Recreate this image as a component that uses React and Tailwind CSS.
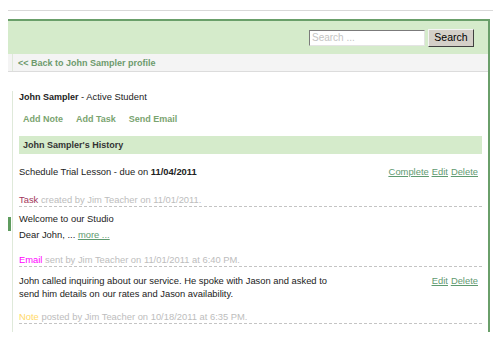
export default function App() {
  const font = { fontFamily: '"Liberation Sans", Arial, sans-serif' };
  return (
    <div className="w-[500px] h-[343px] bg-white text-[#222]" style={font}>
      <div className="h-[10px]" />
      <div className="ml-[8px] w-[485px] h-px bg-[#d9d9d9]" />
      <div className="relative ml-[8px] mt-[8px] w-[482px] border-t-2 border-r-2 border-[#6a9f6a]">
        <div className="h-[33px] bg-[#d5ebcb] flex items-center justify-end pr-[14px]">
          <input
            className="w-[116px] h-[16px] bg-white border border-t-[#7b7b7b] border-l-[#7b7b7b] border-b-[#e4e4e4] border-r-[#e4e4e4] text-[10px] px-[2px] outline-none placeholder:text-[#c4c4c4]"
            placeholder="Search ..."
            style={font}
          />
          <button
            className="ml-[3px] w-[46px] h-[18px] bg-[#d4d0c8] border border-t-[#f4f4f4] border-l-[#f4f4f4] border-b-[#404040] border-r-[#404040] text-[10.5px] text-black leading-none"
            style={font}
          >
            Search
          </button>
        </div>
        <div className="bg-[#f4f4f4] border-b border-[#dcdcdc]">
          <div className="ml-[4px] border-l border-[#dfe9da] h-[17px] pl-[5px] flex items-center">
            <a className="text-[9px] font-bold text-[#6d9a6d] leading-[12px]">&lt;&lt; Back to John Sampler profile</a>
          </div>
        </div>
        <div className="ml-[4px] border-l border-[#dfe9da] pl-[6px] pr-[6px] pb-[8px] text-[9.4px] leading-[12px]">
          <div className="mt-[19px]">
            <span className="font-bold text-[9px]">John Sampler</span> - Active Student
          </div>
          <div className="mt-[10px] flex gap-[13px] pl-[4px] font-bold text-[9px] text-[#7aa470]">
            <a>Add Note</a>
            <a>Add Task</a>
            <a>Send Email</a>
          </div>
          <div className="mt-[11px] h-[18px] bg-[#d5ebcb] px-[4px] flex items-center font-bold text-[9px] text-[#333]">
            John Sampler's History
          </div>
          <div className="mt-[12px] flex justify-between pr-[4px]">
            <div>
              Schedule Trial Lesson - due on <span className="font-bold">11/04/2011</span>
            </div>
            <div className="flex gap-[3px] text-[#5f9a70] underline">
              <a>Complete</a>
              <a>Edit</a>
              <a>Delete</a>
            </div>
          </div>
          <div className="mt-[16px] border-b border-dashed border-[#c4c4c4] text-[#bdbdbd]">
            <span className="text-[#a3385c]">Task</span> created by Jim Teacher on 11/01/2011.
          </div>
          <div className="mt-[6px]">Welcome to our Studio</div>
          <div className="mt-[4px]">
            Dear John, ... <a className="text-[#5f9a70] underline">more ...</a>
          </div>
          <div className="mt-[13px] border-b border-dashed border-[#c4c4c4] text-[#bdbdbd]">
            <span className="text-[#ff00ff]">Email</span> sent by Jim Teacher on 11/01/2011 at 6:40 PM.
          </div>
          <div className="mt-[7px] flex justify-between pr-[4px] leading-[13px]">
            <div className="w-[315px]">
              John called inquiring about our service. He spoke with Jason and asked to send him details on our rates and Jason availability.
            </div>
            <div className="flex gap-[3px] text-[#5f9a70] underline">
              <a>Edit</a>
              <a>Delete</a>
            </div>
          </div>
          <div className="mt-[11px] border-b border-dashed border-[#c4c4c4] text-[#bdbdbd]">
            <span className="text-[#ffd966]">Note</span> posted by Jim Teacher on 10/18/2011 at 6:35 PM.
          </div>
        </div>
        <div className="absolute left-0 top-[196px] w-[3px] h-[14px] bg-[#5f9c5f]" />
      </div>
    </div>
  );
}
